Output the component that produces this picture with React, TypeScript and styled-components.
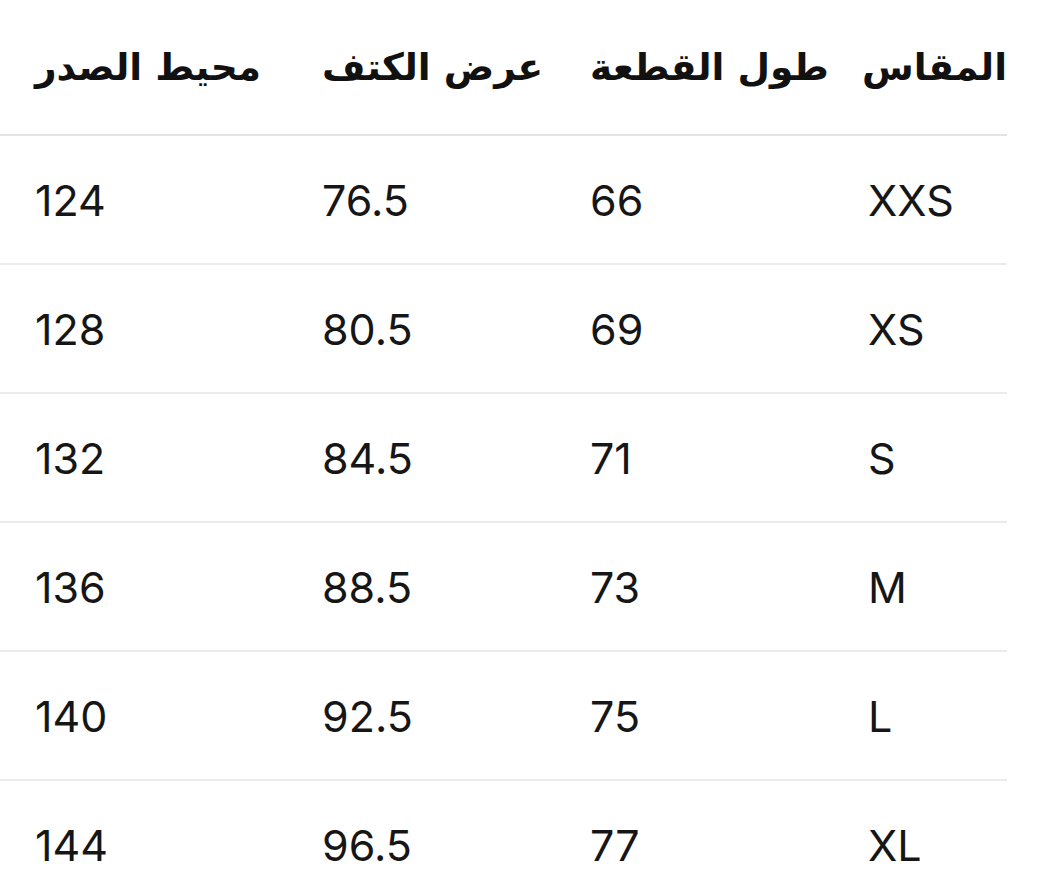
import styled, { createGlobalStyle } from "styled-components";

const GlobalStyle = createGlobalStyle`
  html, body {
    margin: 0;
    padding: 0;
    background: #ffffff;
  }
  body {
    font-family: "Inter", "DejaVu Sans", sans-serif;
    overflow: hidden;
  }
`;

const Wrapper = styled.div`
  width: 1039px;
  direction: rtl;
`;

const Table = styled.table`
  width: 1007px;
  margin-left: 0;
  margin-right: auto;
  border-collapse: collapse;
  table-layout: fixed;
`;

const Col = styled.col<{ $w: number }>`
  width: ${(p) => p.$w}px;
`;

const HeadCell = styled.th`
  height: 134px;
  padding: 0 0 0 35px;
  text-align: left;
  vertical-align: middle;
  font-family: "DejaVu Sans", sans-serif;
  font-size: 37.5px;
  font-weight: 700;
  color: #111111;
  white-space: nowrap;
  border-bottom: 2px solid #e3e3e3;
`;

const Cell = styled.td`
  height: 127px;
  padding: 0 0 0 35px;
  text-align: left;
  vertical-align: middle;
  font-family: "Inter", "Liberation Sans", sans-serif;
  font-size: 43px;
  font-weight: 400;
  color: #161616;
  direction: ltr;
  unicode-bidi: plaintext;
  border-bottom: 2px solid #ebebeb;
`;

const columns = ["المقاس", "طول القطعة", "عرض الكتف", "محيط الصدر"];

const rows: [string, string, string, string][] = [
  ["XXS", "66", "76.5", "124"],
  ["XS", "69", "80.5", "128"],
  ["S", "71", "84.5", "132"],
  ["M", "73", "88.5", "136"],
  ["L", "75", "92.5", "140"],
  ["XL", "77", "96.5", "144"],
];

const widths = [174, 278, 268, 287];

export default function App() {
  return (
    <Wrapper>
      <GlobalStyle />
      <Table>
        <colgroup>
          {widths.map((w, i) => (
            <Col key={i} $w={w} />
          ))}
        </colgroup>
        <thead>
          <tr>
            {columns.map((c) => (
              <HeadCell key={c}>{c}</HeadCell>
            ))}
          </tr>
        </thead>
        <tbody>
          {rows.map((r) => (
            <tr key={r[0]}>
              {r.map((v, i) => (
                <Cell key={i}>{v}</Cell>
              ))}
            </tr>
          ))}
        </tbody>
      </Table>
    </Wrapper>
  );
}
